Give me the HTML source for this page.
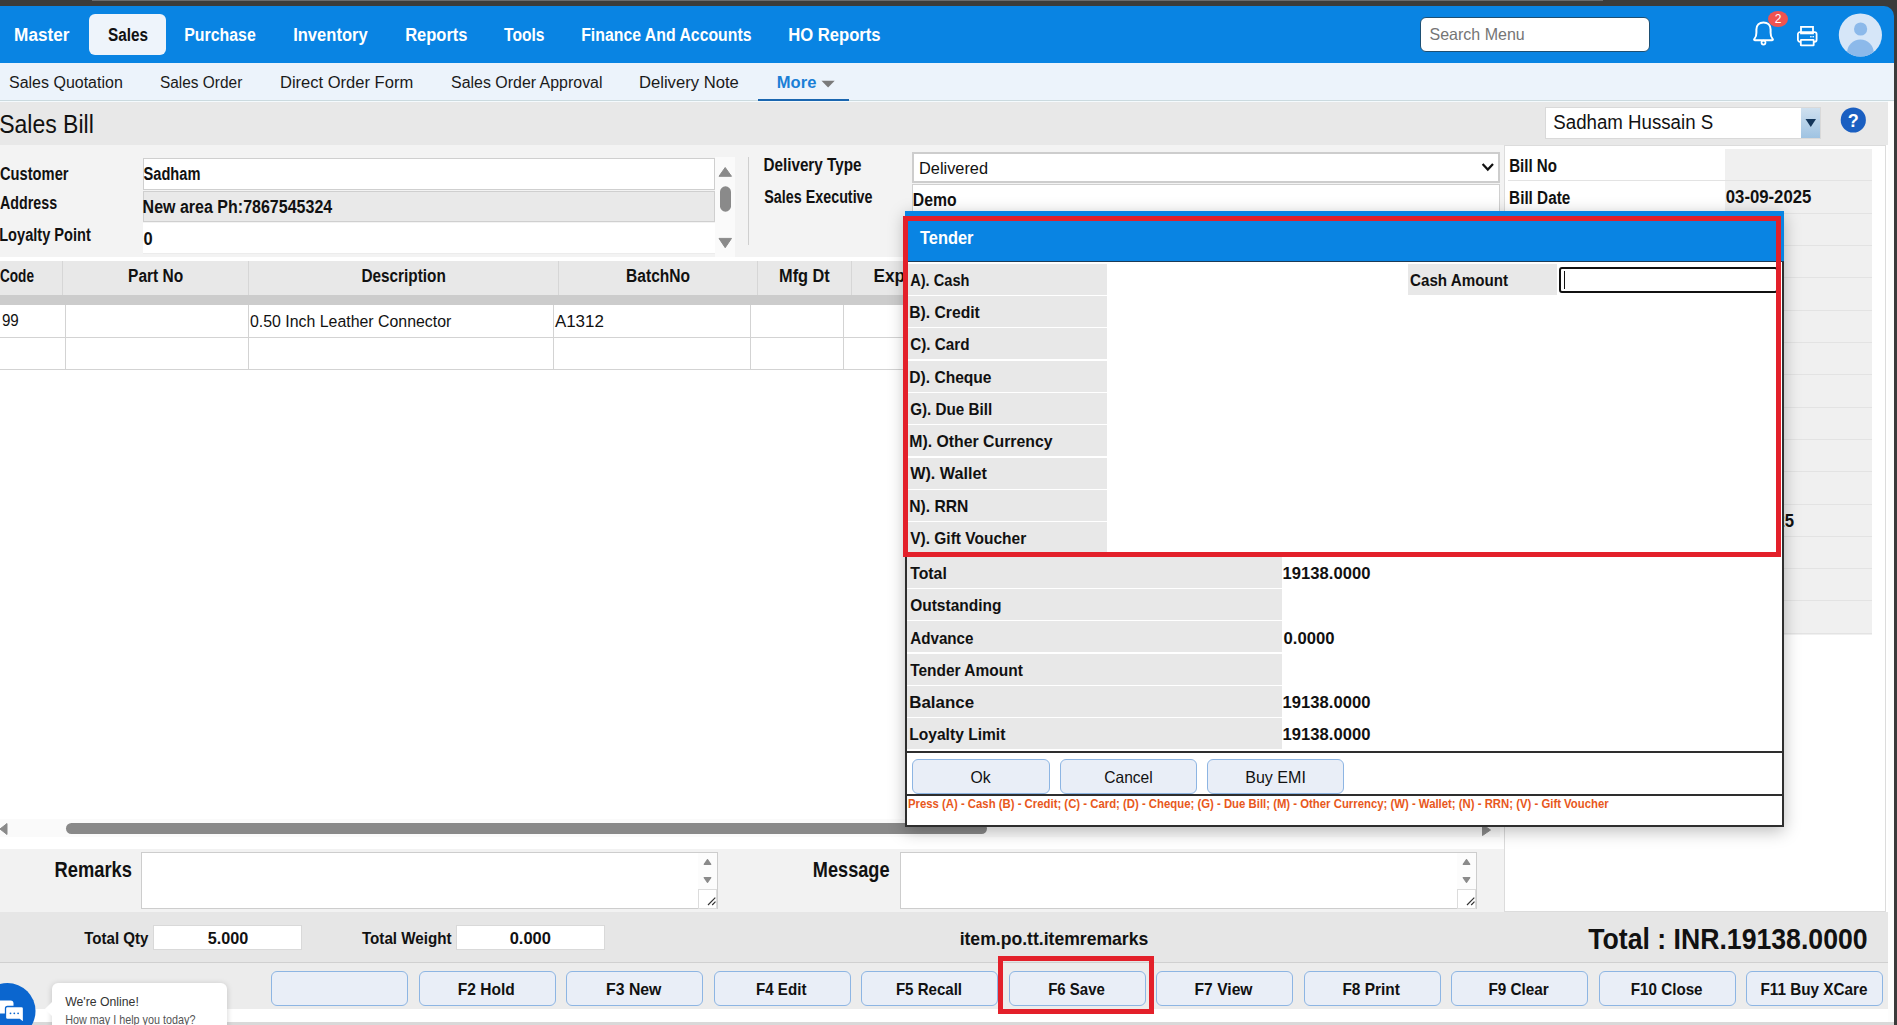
<!DOCTYPE html>
<html><head><meta charset="utf-8"><title>Sales Bill</title>
<style>
html,body{margin:0;padding:0;width:1897px;height:1025px;overflow:hidden;background:#fff;font-family:"Liberation Sans",sans-serif;}
.L{position:absolute;left:0;top:0;width:1897px;height:1025px;}
.L>div{position:absolute;box-sizing:border-box;}
.tl{position:absolute;left:0;top:0;overflow:visible;font-family:"Liberation Sans",sans-serif;}
</style></head><body>
<div class="L" style="z-index:1"><div style="left:0px;top:0px;width:1897px;height:6px;background:#3c3c3a"></div><div style="left:1870px;top:0px;width:27px;height:30px;background:#3b3b3b"></div><div style="left:92px;top:0px;width:1511px;height:1px;background:#6b6b6b"></div><div style="left:1894px;top:0px;width:3px;height:1025px;background:#3b3b3b"></div><div style="left:0px;top:6px;width:1894px;height:57px;background:#0984e3;border-top-right-radius:10px"></div><div style="left:0px;top:63px;width:1894px;height:38px;background:#ecf3fb;border-bottom:1px solid #cbdadf"></div><div style="left:0px;top:101px;width:1888px;height:1px;background:#f4fafd"></div><div style="left:0px;top:102px;width:1888px;height:43px;background:#e8e8e8"></div><div style="left:0px;top:145px;width:1504px;height:112px;background:#f3f3f3"></div><div style="left:1888px;top:101px;width:6px;height:922px;background:#fdfdfd"></div><div style="left:0px;top:1022px;width:1894px;height:3px;background:#d9d9d9"></div><div style="left:89px;top:14px;width:77px;height:41px;background:#eef4fb;border-radius:6px"></div><div style="left:1420px;top:17px;width:230px;height:35px;background:#fff;border:1px solid #1d4f73;border-radius:6px"></div><div style="left:758px;top:99px;width:91px;height:2px;background:#1a66b0"></div><div style="left:1545px;top:107px;width:276px;height:32px;background:#fff;border:1px solid #d9d9d9"></div><div style="left:1801px;top:108px;width:19px;height:30px;background:linear-gradient(#cfe0ef,#9fc3e2)"></div><svg style="position:absolute;left:1805px;top:118px" width="12" height="10"><path d="M0.5 1 L11 1 L5.75 9 Z" fill="#14365a"/></svg><svg style="position:absolute;left:1840px;top:107px" width="27" height="27"><circle cx="13.3" cy="13" r="12.6" fill="#1a5fc1"/><text x="13.3" y="19.5" text-anchor="middle" font-family="Liberation Sans" font-weight="700" font-size="18" fill="#fff">?</text></svg><div style="left:143px;top:158px;width:572px;height:32px;background:#fff;border:1px solid #cfcfcf"></div><div style="left:143px;top:191px;width:572px;height:31px;background:#e9e9e9;border:1px solid #cfcfcf"></div><div style="left:143px;top:223px;width:572px;height:31px;background:#fff;border-bottom:1px solid #ececec"></div><div style="left:715px;top:157px;width:20px;height:100px;background:#fafafa"></div><svg style="position:absolute;left:715px;top:157px" width="20" height="100"><path d="M4 19.3 L10.2 10.5 L16.5 19.3 Z" fill="#8a8a8a" stroke="#8a8a8a" stroke-width="1" stroke-linejoin="round"/><rect x="5" y="29.3" width="11" height="25.4" rx="5.5" fill="#8a8a8a"/><path d="M4 81.4 L16.5 81.4 L10.2 90.7 Z" fill="#8a8a8a" stroke="#8a8a8a" stroke-width="1" stroke-linejoin="round"/></svg><div style="left:748px;top:157px;width:1px;height:88px;background:#cfcfcf"></div><div style="left:912px;top:152px;width:588px;height:31px;background:#fff;border:2px solid #cdcdcd"></div><svg style="position:absolute;left:1481px;top:162px" width="14" height="11"><path d="M1.6 2 L6.8 7.6 L12 2" fill="none" stroke="#111" stroke-width="2.2"/></svg><div style="left:912px;top:184px;width:588px;height:40px;background:#fff;border-left:1px solid #d0d0d0;border-top:1px solid #d0d0d0;border-right:1px solid #d0d0d0"></div><div style="left:0px;top:257px;width:1500px;height:592px;background:#fff"></div><div style="left:0px;top:261px;width:1500px;height:34px;background:#e8e8e8"></div><div style="left:62px;top:261px;width:1px;height:34px;background:#d6d6d6"></div><div style="left:248px;top:261px;width:1px;height:34px;background:#d6d6d6"></div><div style="left:558px;top:261px;width:1px;height:34px;background:#d6d6d6"></div><div style="left:757px;top:261px;width:1px;height:34px;background:#d6d6d6"></div><div style="left:851px;top:261px;width:1px;height:34px;background:#d6d6d6"></div><div style="left:0px;top:295px;width:1500px;height:10px;background:#cccccc"></div><div style="left:0px;top:337px;width:1500px;height:1px;background:#d3d3d3"></div><div style="left:0px;top:369px;width:1500px;height:1px;background:#d3d3d3"></div><div style="left:65px;top:305px;width:1px;height:65px;background:#d3d3d3"></div><div style="left:248px;top:305px;width:1px;height:65px;background:#d3d3d3"></div><div style="left:553px;top:305px;width:1px;height:65px;background:#d3d3d3"></div><div style="left:750px;top:305px;width:1px;height:65px;background:#d3d3d3"></div><div style="left:843px;top:305px;width:1px;height:65px;background:#d3d3d3"></div><div style="left:0px;top:819px;width:1500px;height:18px;background:#fafafa"></div><div style="left:66px;top:823px;width:921px;height:11px;background:#898989;border-radius:6px"></div><svg style="position:absolute;left:0;top:822px" width="10" height="14"><path d="M7 1.5 L7 12.5 L0 7 Z" fill="#8a8a8a" stroke="#8a8a8a" stroke-linejoin="round"/></svg><svg style="position:absolute;left:1481px;top:823px" width="12" height="14"><path d="M1.5 1.5 L1.5 12.5 L9.5 7 Z" fill="#8a8a8a" stroke="#8a8a8a" stroke-linejoin="round"/></svg><div style="left:0px;top:849px;width:1504px;height:63px;background:#f2f2f2"></div><div style="left:141px;top:852px;width:577px;height:57px;background:#fff;border:1px solid #cdcdcd"></div><div style="left:900px;top:852px;width:577px;height:57px;background:#fff;border:1px solid #cdcdcd"></div><svg style="position:absolute;left:698px;top:853px" width="19" height="56"><rect x="0" y="0" width="19" height="36" fill="#fcfcfc"/><path d="M6.2 11.3 L9.5 6.6 L12.8 11.3 Z" fill="#8a8a8a" stroke="#8a8a8a" stroke-width="1.2" stroke-linejoin="round"/><path d="M6.2 24.6 L12.8 24.6 L9.5 29.3 Z" fill="#8a8a8a" stroke="#8a8a8a" stroke-width="1.2" stroke-linejoin="round"/><rect x="0.5" y="36.5" width="18" height="19" fill="#fff" stroke="#dcdcdc"/><path d="M10 52 L17.3 44.7 M14.2 52 L17.5 48.7" stroke="#333" stroke-width="1.2"/></svg><svg style="position:absolute;left:1457px;top:853px" width="19" height="56"><rect x="0" y="0" width="19" height="36" fill="#fcfcfc"/><path d="M6.2 11.3 L9.5 6.6 L12.8 11.3 Z" fill="#8a8a8a" stroke="#8a8a8a" stroke-width="1.2" stroke-linejoin="round"/><path d="M6.2 24.6 L12.8 24.6 L9.5 29.3 Z" fill="#8a8a8a" stroke="#8a8a8a" stroke-width="1.2" stroke-linejoin="round"/><rect x="0.5" y="36.5" width="18" height="19" fill="#fff" stroke="#dcdcdc"/><path d="M10 52 L17.3 44.7 M14.2 52 L17.5 48.7" stroke="#333" stroke-width="1.2"/></svg><div style="left:1504px;top:145px;width:382px;height:767px;background:#fff;border:1px solid #dcdcdc"></div><div style="left:1508px;top:149px;width:364px;height:486px;background:#fff"></div><div style="left:1725px;top:149px;width:147px;height:486px;background:#f0f0f0"></div><div style="left:1508px;top:180px;width:364px;height:1px;background:#e3e3e3"></div><div style="left:1508px;top:213px;width:364px;height:1px;background:#e3e3e3"></div><div style="left:1508px;top:245px;width:364px;height:1px;background:#e3e3e3"></div><div style="left:1508px;top:277px;width:364px;height:1px;background:#e3e3e3"></div><div style="left:1508px;top:310px;width:364px;height:1px;background:#e3e3e3"></div><div style="left:1508px;top:342px;width:364px;height:1px;background:#e3e3e3"></div><div style="left:1508px;top:374px;width:364px;height:1px;background:#e3e3e3"></div><div style="left:1508px;top:407px;width:364px;height:1px;background:#e3e3e3"></div><div style="left:1508px;top:439px;width:364px;height:1px;background:#e3e3e3"></div><div style="left:1508px;top:471px;width:364px;height:1px;background:#e3e3e3"></div><div style="left:1508px;top:504px;width:364px;height:1px;background:#e3e3e3"></div><div style="left:1508px;top:536px;width:364px;height:1px;background:#e3e3e3"></div><div style="left:1508px;top:568px;width:364px;height:1px;background:#e3e3e3"></div><div style="left:1508px;top:600px;width:364px;height:1px;background:#e3e3e3"></div><div style="left:1508px;top:633px;width:364px;height:1px;background:#e3e3e3"></div><div style="left:0px;top:912px;width:1888px;height:51px;background:#e6e6e6;border-bottom:1px solid #d0d0d0"></div><div style="left:153px;top:925px;width:149px;height:25px;background:#fff;border:1px solid #d9d9d9"></div><div style="left:456px;top:925px;width:149px;height:25px;background:#fff;border:1px solid #d9d9d9"></div><div style="left:0px;top:963px;width:1888px;height:46px;background:#ececec"></div><div style="left:271px;top:971px;width:137px;height:35px;background:#e9eef7;border:1px solid #8db5e3;border-radius:6px"></div><div style="left:419px;top:971px;width:137px;height:35px;background:#e9eef7;border:1px solid #8db5e3;border-radius:6px"></div><div style="left:566px;top:971px;width:137px;height:35px;background:#e9eef7;border:1px solid #8db5e3;border-radius:6px"></div><div style="left:714px;top:971px;width:137px;height:35px;background:#e9eef7;border:1px solid #8db5e3;border-radius:6px"></div><div style="left:861px;top:971px;width:137px;height:35px;background:#e9eef7;border:1px solid #8db5e3;border-radius:6px"></div><div style="left:1009px;top:971px;width:137px;height:35px;background:#e9eef7;border:1px solid #8db5e3;border-radius:6px"></div><div style="left:1156px;top:971px;width:137px;height:35px;background:#e9eef7;border:1px solid #8db5e3;border-radius:6px"></div><div style="left:1304px;top:971px;width:137px;height:35px;background:#e9eef7;border:1px solid #8db5e3;border-radius:6px"></div><div style="left:1451px;top:971px;width:137px;height:35px;background:#e9eef7;border:1px solid #8db5e3;border-radius:6px"></div><div style="left:1599px;top:971px;width:137px;height:35px;background:#e9eef7;border:1px solid #8db5e3;border-radius:6px"></div><div style="left:1746px;top:971px;width:137px;height:35px;background:#e9eef7;border:1px solid #8db5e3;border-radius:6px"></div><svg style="position:absolute;left:1750px;top:8px" width="45" height="42"><path d="M4.6 30.6 C6.6 28.6 6.4 26.5 6.4 24 L6.4 21.5 C6.4 17 9.5 14.4 13.5 14.4 C17.5 14.4 20.6 17 20.6 21.5 L20.6 24 C20.6 26.5 20.4 28.6 22.4 30.6 Q23.6 32 22 32.2 L5 32.2 Q3.4 32 4.6 30.6 Z" fill="none" stroke="#fff" stroke-width="2" stroke-linejoin="round"/><circle cx="13.5" cy="34.6" r="2" fill="none" stroke="#fff" stroke-width="1.7"/><ellipse cx="28" cy="11" rx="10" ry="8" fill="#ef5350"/><text x="28" y="15.3" text-anchor="middle" font-family="Liberation Sans" font-size="12" fill="#fff">2</text></svg><svg style="position:absolute;left:1795px;top:24px" width="25" height="24"><rect x="6" y="2.9" width="12" height="6.5" fill="none" stroke="#fff" stroke-width="1.8"/><rect x="2.9" y="8.2" width="18.7" height="9.6" rx="2" fill="none" stroke="#fff" stroke-width="1.8"/><rect x="5.8" y="15.8" width="12.9" height="5.6" rx="0.5" fill="#0984e3" stroke="#fff" stroke-width="1.8"/><rect x="15.2" y="12" width="1.4" height="1.4" fill="#fff"/><rect x="17.5" y="12" width="1.4" height="1.4" fill="#fff"/></svg><svg style="position:absolute;left:1838px;top:13px" width="45" height="45"><defs><clipPath id="av"><circle cx="22.4" cy="22" r="21.6"/></clipPath></defs><circle cx="22.4" cy="22" r="21.6" fill="#d6e6f8"/><g clip-path="url(#av)"><circle cx="22.6" cy="16" r="6.6" fill="#8cb9ea"/><ellipse cx="22.4" cy="40" rx="13.4" ry="13.6" fill="#8cb9ea"/></g></svg><svg style="position:absolute;left:820px;top:79px" width="16" height="10"><path d="M1.5 1.7 L14.7 1.7 L8.1 8.5 Z" fill="#7a7a7a"/></svg></div>
<svg class="tl" style="z-index:2" width="1897" height="1025"><text x="14.10" y="41.4" font-size="19.19" font-weight="700" fill="#fff" textLength="55.42" lengthAdjust="spacingAndGlyphs">Master</text><text x="184.17" y="41.4" font-size="19.19" font-weight="700" fill="#fff" textLength="71.56" lengthAdjust="spacingAndGlyphs">Purchase</text><text x="293.14" y="41.4" font-size="19.19" font-weight="700" fill="#fff" textLength="74.58" lengthAdjust="spacingAndGlyphs">Inventory</text><text x="405.14" y="41.4" font-size="19.19" font-weight="700" fill="#fff" textLength="62.44" lengthAdjust="spacingAndGlyphs">Reports</text><text x="504.00" y="41.4" font-size="19.19" font-weight="700" fill="#fff" textLength="40.55" lengthAdjust="spacingAndGlyphs">Tools</text><text x="581.18" y="41.4" font-size="19.19" font-weight="700" fill="#fff" textLength="170.37" lengthAdjust="spacingAndGlyphs">Finance And Accounts</text><text x="788.13" y="41.4" font-size="19.19" font-weight="700" fill="#fff" textLength="92.45" lengthAdjust="spacingAndGlyphs">HO Reports</text><text x="108.00" y="41.4" font-size="19.19" font-weight="700" fill="#111" textLength="40.04" lengthAdjust="spacingAndGlyphs">Sales</text><text x="1429.50" y="39.9" font-size="16.72" font-weight="normal" fill="#757575" textLength="95.28" lengthAdjust="spacingAndGlyphs">Search Menu</text><text x="9.00" y="87.6" font-size="15.84" font-weight="normal" fill="#1a1a1a" textLength="113.81" lengthAdjust="spacingAndGlyphs">Sales Quotation</text><text x="160.00" y="87.6" font-size="15.84" font-weight="normal" fill="#1a1a1a" textLength="82.29" lengthAdjust="spacingAndGlyphs">Sales Order</text><text x="279.96" y="87.6" font-size="15.84" font-weight="normal" fill="#1a1a1a" textLength="133.24" lengthAdjust="spacingAndGlyphs">Direct Order Form</text><text x="451.00" y="87.6" font-size="15.84" font-weight="normal" fill="#1a1a1a" textLength="151.52" lengthAdjust="spacingAndGlyphs">Sales Order Approval</text><text x="638.95" y="87.6" font-size="15.84" font-weight="normal" fill="#1a1a1a" textLength="99.84" lengthAdjust="spacingAndGlyphs">Delivery Note</text><text x="776.82" y="87.8" font-size="16.86" font-weight="700" fill="#1a7fd6" textLength="39.55" lengthAdjust="spacingAndGlyphs">More</text><text x="-0.87" y="133" font-size="26.45" font-weight="normal" fill="#111" textLength="94.63" lengthAdjust="spacingAndGlyphs">Sales Bill</text><text x="1553.30" y="128.9" font-size="19.77" font-weight="normal" fill="#111" textLength="159.87" lengthAdjust="spacingAndGlyphs">Sadham Hussain S</text><text x="0.00" y="180" font-size="17.44" font-weight="700" fill="#111" textLength="68.52" lengthAdjust="spacingAndGlyphs">Customer</text><text x="0.00" y="208.5" font-size="17.44" font-weight="700" fill="#111" textLength="57.07" lengthAdjust="spacingAndGlyphs">Address</text><text x="-0.84" y="241.3" font-size="17.44" font-weight="700" fill="#111" textLength="91.68" lengthAdjust="spacingAndGlyphs">Loyalty Point</text><text x="143.50" y="180" font-size="17.44" font-weight="700" fill="#111" textLength="56.92" lengthAdjust="spacingAndGlyphs">Sadham</text><text x="142.58" y="213" font-size="17.44" font-weight="700" fill="#111" textLength="189.64" lengthAdjust="spacingAndGlyphs">New area Ph:7867545324</text><text x="143.50" y="245" font-size="17.44" font-weight="700" fill="#111" textLength="9.16" lengthAdjust="spacingAndGlyphs">0</text><text x="763.42" y="171" font-size="17.44" font-weight="700" fill="#111" textLength="98.11" lengthAdjust="spacingAndGlyphs">Delivery Type</text><text x="764.30" y="203.2" font-size="17.44" font-weight="700" fill="#111" textLength="108.25" lengthAdjust="spacingAndGlyphs">Sales Executive</text><text x="919.05" y="174" font-size="17.15" font-weight="normal" fill="#111" textLength="68.96" lengthAdjust="spacingAndGlyphs">Delivered</text><text x="912.80" y="205.9" font-size="17.44" font-weight="700" fill="#111" textLength="43.79" lengthAdjust="spacingAndGlyphs">Demo</text><text x="1509.13" y="172" font-size="17.44" font-weight="700" fill="#111" textLength="47.83" lengthAdjust="spacingAndGlyphs">Bill No</text><text x="1509.12" y="204" font-size="17.44" font-weight="700" fill="#111" textLength="61.11" lengthAdjust="spacingAndGlyphs">Bill Date</text><text x="1725.80" y="203.3" font-size="17.44" font-weight="700" fill="#111" textLength="85.51" lengthAdjust="spacingAndGlyphs">03-09-2025</text><text x="1708.50" y="527" font-size="17.44" font-weight="700" fill="#111" textLength="85.51" lengthAdjust="spacingAndGlyphs">03-09-2025</text><text x="0.00" y="282" font-size="17.44" font-weight="700" fill="#111" textLength="33.96" lengthAdjust="spacingAndGlyphs">Code</text><text x="128.11" y="282" font-size="17.44" font-weight="700" fill="#111" textLength="55.17" lengthAdjust="spacingAndGlyphs">Part No</text><text x="361.42" y="282" font-size="17.44" font-weight="700" fill="#111" textLength="84.45" lengthAdjust="spacingAndGlyphs">Description</text><text x="626.11" y="282" font-size="17.44" font-weight="700" fill="#111" textLength="63.97" lengthAdjust="spacingAndGlyphs">BatchNo</text><text x="779.06" y="282" font-size="17.44" font-weight="700" fill="#111" textLength="50.76" lengthAdjust="spacingAndGlyphs">Mfg Dt</text><text x="873.51" y="282" font-size="17.44" font-weight="700" fill="#111" textLength="31.63" lengthAdjust="spacingAndGlyphs">Exp</text><text x="1.90" y="326.3" font-size="16.86" font-weight="normal" fill="#111" textLength="16.84" lengthAdjust="spacingAndGlyphs">99</text><text x="250.00" y="327.2" font-size="16.86" font-weight="normal" fill="#111" textLength="201.34" lengthAdjust="spacingAndGlyphs">0.50 Inch Leather Connector</text><text x="554.90" y="327.2" font-size="16.86" font-weight="normal" fill="#111" textLength="48.98" lengthAdjust="spacingAndGlyphs">A1312</text><text x="54.44" y="877.1" font-size="21.37" font-weight="700" fill="#111" textLength="77.51" lengthAdjust="spacingAndGlyphs">Remarks</text><text x="812.85" y="876.5" font-size="21.37" font-weight="700" fill="#111" textLength="76.65" lengthAdjust="spacingAndGlyphs">Message</text><text x="84.20" y="943.7" font-size="16.86" font-weight="700" fill="#111" textLength="64.24" lengthAdjust="spacingAndGlyphs">Total Qty</text><text x="207.70" y="943.7" font-size="16.86" font-weight="700" fill="#111" textLength="40.56" lengthAdjust="spacingAndGlyphs">5.000</text><text x="361.90" y="943.8" font-size="16.86" font-weight="700" fill="#111" textLength="89.75" lengthAdjust="spacingAndGlyphs">Total Weight</text><text x="509.70" y="943.8" font-size="16.86" font-weight="700" fill="#111" textLength="41.17" lengthAdjust="spacingAndGlyphs">0.000</text><text x="959.63" y="944.9" font-size="18.17" font-weight="700" fill="#111" textLength="188.66" lengthAdjust="spacingAndGlyphs">item.po.tt.itemremarks</text><text x="1588.20" y="948.5" font-size="30.23" font-weight="700" fill="#111" textLength="279.41" lengthAdjust="spacingAndGlyphs">Total : INR.19138.0000</text><text x="457.79" y="995.1" font-size="17.15" font-weight="700" fill="#111" textLength="57.03" lengthAdjust="spacingAndGlyphs">F2 Hold</text><text x="606.08" y="995.1" font-size="17.15" font-weight="700" fill="#111" textLength="55.31" lengthAdjust="spacingAndGlyphs">F3 New</text><text x="756.02" y="995.1" font-size="17.15" font-weight="700" fill="#111" textLength="50.42" lengthAdjust="spacingAndGlyphs">F4 Edit</text><text x="895.92" y="995.1" font-size="17.15" font-weight="700" fill="#111" textLength="66.15" lengthAdjust="spacingAndGlyphs">F5 Recall</text><text x="1048.23" y="995.1" font-size="17.15" font-weight="700" fill="#111" textLength="56.64" lengthAdjust="spacingAndGlyphs">F6 Save</text><text x="1194.59" y="995.1" font-size="17.15" font-weight="700" fill="#111" textLength="57.90" lengthAdjust="spacingAndGlyphs">F7 View</text><text x="1342.40" y="995.1" font-size="17.15" font-weight="700" fill="#111" textLength="57.54" lengthAdjust="spacingAndGlyphs">F8 Print</text><text x="1488.41" y="995.1" font-size="17.15" font-weight="700" fill="#111" textLength="60.40" lengthAdjust="spacingAndGlyphs">F9 Clear</text><text x="1630.81" y="995.1" font-size="17.15" font-weight="700" fill="#111" textLength="71.76" lengthAdjust="spacingAndGlyphs">F10 Close</text><text x="1760.51" y="995.1" font-size="17.15" font-weight="700" fill="#111" textLength="106.97" lengthAdjust="spacingAndGlyphs">F11 Buy XCare</text></svg>
<div class="L" style="z-index:3"><div style="left:905px;top:211px;width:879px;height:616px;background:#fff;border:2px solid #2e2e2e;border-top:none;box-shadow:0 4px 16px rgba(0,0,0,0.27)"></div><div style="left:905px;top:211px;width:879px;height:51px;background:#0984e3;border-bottom:1px solid #1d3b56"></div><div style="left:907px;top:264px;width:200px;height:31px;background:#e8e8e8"></div><div style="left:907px;top:296px;width:200px;height:31px;background:#e8e8e8"></div><div style="left:907px;top:328px;width:200px;height:31px;background:#e8e8e8"></div><div style="left:907px;top:361px;width:200px;height:31px;background:#e8e8e8"></div><div style="left:907px;top:393px;width:200px;height:31px;background:#e8e8e8"></div><div style="left:907px;top:425px;width:200px;height:31px;background:#e8e8e8"></div><div style="left:907px;top:458px;width:200px;height:31px;background:#e8e8e8"></div><div style="left:907px;top:490px;width:200px;height:31px;background:#e8e8e8"></div><div style="left:907px;top:522px;width:200px;height:31px;background:#e8e8e8"></div><div style="left:1408px;top:264px;width:149px;height:31px;background:#e8e8e8"></div><div style="left:1559px;top:267px;width:219px;height:26px;background:#fff;border:2px solid #111;border-radius:3px"></div><div style="left:1564px;top:271px;width:1px;height:18px;background:#111"></div><div style="left:907px;top:557px;width:375px;height:31px;background:#e8e8e8"></div><div style="left:907px;top:589px;width:375px;height:31px;background:#e8e8e8"></div><div style="left:907px;top:621px;width:375px;height:31px;background:#e8e8e8"></div><div style="left:907px;top:654px;width:375px;height:31px;background:#e8e8e8"></div><div style="left:907px;top:686px;width:375px;height:31px;background:#e8e8e8"></div><div style="left:907px;top:718px;width:375px;height:31px;background:#e8e8e8"></div><div style="left:907px;top:751px;width:875px;height:2px;background:#2e2e2e"></div><div style="left:907px;top:794px;width:875px;height:2px;background:#2e2e2e"></div><div style="left:912px;top:759px;width:138px;height:35px;background:#e9eef7;border:1px solid #8db5e3;border-radius:6px"></div><div style="left:1060px;top:759px;width:137px;height:35px;background:#e9eef7;border:1px solid #8db5e3;border-radius:6px"></div><div style="left:1207px;top:759px;width:137px;height:35px;background:#e9eef7;border:1px solid #8db5e3;border-radius:6px"></div></div>
<svg class="tl" style="z-index:4" width="1897" height="1025"><text x="920.00" y="244.3" font-size="18.6" font-weight="700" fill="#fff" textLength="53.51" lengthAdjust="spacingAndGlyphs">Tender</text><text x="910.20" y="285.8" font-size="16.86" font-weight="700" fill="#111" textLength="59.26" lengthAdjust="spacingAndGlyphs">A). Cash</text><text x="909.27" y="318.05" font-size="16.86" font-weight="700" fill="#111" textLength="70.57" lengthAdjust="spacingAndGlyphs">B). Credit</text><text x="910.20" y="350.3" font-size="16.86" font-weight="700" fill="#111" textLength="59.27" lengthAdjust="spacingAndGlyphs">C). Card</text><text x="909.28" y="382.55" font-size="16.86" font-weight="700" fill="#111" textLength="82.27" lengthAdjust="spacingAndGlyphs">D). Cheque</text><text x="910.20" y="414.8" font-size="16.86" font-weight="700" fill="#111" textLength="82.02" lengthAdjust="spacingAndGlyphs">G). Due Bill</text><text x="909.26" y="447.05" font-size="16.86" font-weight="700" fill="#111" textLength="143.35" lengthAdjust="spacingAndGlyphs">M). Other Currency</text><text x="910.20" y="479.3" font-size="16.86" font-weight="700" fill="#111" textLength="76.63" lengthAdjust="spacingAndGlyphs">W). Wallet</text><text x="909.27" y="511.55" font-size="16.86" font-weight="700" fill="#111" textLength="59.09" lengthAdjust="spacingAndGlyphs">N). RRN</text><text x="910.20" y="543.8" font-size="16.86" font-weight="700" fill="#111" textLength="116.00" lengthAdjust="spacingAndGlyphs">V). Gift Voucher</text><text x="1410.00" y="286" font-size="16.86" font-weight="700" fill="#111" textLength="98.05" lengthAdjust="spacingAndGlyphs">Cash Amount</text><text x="910.20" y="579.0" font-size="16.86" font-weight="700" fill="#111" textLength="36.64" lengthAdjust="spacingAndGlyphs">Total</text><text x="1282.61" y="579.0" font-size="16.86" font-weight="700" fill="#111" textLength="87.76" lengthAdjust="spacingAndGlyphs">19138.0000</text><text x="910.20" y="611.25" font-size="16.86" font-weight="700" fill="#111" textLength="91.27" lengthAdjust="spacingAndGlyphs">Outstanding</text><text x="910.20" y="643.5" font-size="16.86" font-weight="700" fill="#111" textLength="63.34" lengthAdjust="spacingAndGlyphs">Advance</text><text x="1283.60" y="643.5" font-size="16.86" font-weight="700" fill="#111" textLength="50.97" lengthAdjust="spacingAndGlyphs">0.0000</text><text x="910.20" y="675.75" font-size="16.86" font-weight="700" fill="#111" textLength="112.65" lengthAdjust="spacingAndGlyphs">Tender Amount</text><text x="909.20" y="708.0" font-size="16.86" font-weight="700" fill="#111" textLength="64.88" lengthAdjust="spacingAndGlyphs">Balance</text><text x="1282.61" y="708.0" font-size="16.86" font-weight="700" fill="#111" textLength="87.76" lengthAdjust="spacingAndGlyphs">19138.0000</text><text x="909.28" y="740.25" font-size="16.86" font-weight="700" fill="#111" textLength="96.07" lengthAdjust="spacingAndGlyphs">Loyalty Limit</text><text x="1282.61" y="740.25" font-size="16.86" font-weight="700" fill="#111" textLength="87.76" lengthAdjust="spacingAndGlyphs">19138.0000</text><text x="970.40" y="782.5" font-size="16.72" font-weight="normal" fill="#111" textLength="20.19" lengthAdjust="spacingAndGlyphs">Ok</text><text x="1104.20" y="782.5" font-size="16.72" font-weight="normal" fill="#111" textLength="48.56" lengthAdjust="spacingAndGlyphs">Cancel</text><text x="1245.24" y="782.5" font-size="16.72" font-weight="normal" fill="#111" textLength="60.68" lengthAdjust="spacingAndGlyphs">Buy EMI</text><text x="907.90" y="807.7" font-size="12.35" font-weight="700" fill="#e8581c" textLength="700.82" lengthAdjust="spacingAndGlyphs">Press (A) - Cash (B) - Credit; (C) - Card; (D) - Cheque; (G) - Due Bill; (M) - Other Currency; (W) - Wallet; (N) - RRN; (V) - Gift Voucher</text></svg>
<div class="L" style="z-index:5"><div style="left:903px;top:216px;width:878px;height:341px;border:5px solid #e3202a"></div><div style="left:998px;top:956px;width:156px;height:58px;border:5px solid #e3202a"></div><svg style="position:absolute;left:0;top:983px" width="40" height="42"><circle cx="7.5" cy="28" r="28" fill="#0b66cf"/><rect x="-6" y="17.5" width="19.5" height="13" rx="3" fill="#fff"/><path d="M7.5 23.5 L21.5 23.5 Q23.5 23.5 23.5 25.5 L23.5 39.5 L19.5 36.5 L7.5 36.5 Q5.5 36.5 5.5 34.5 L5.5 25.5 Q5.5 23.5 7.5 23.5 Z" fill="#fff" stroke="#0b66cf" stroke-width="1.3"/><circle cx="10.5" cy="30.3" r="0.9" fill="#0b66cf"/><circle cx="14.3" cy="30.3" r="0.9" fill="#0b66cf"/><circle cx="18.1" cy="30.3" r="0.9" fill="#0b66cf"/></svg><div style="left:52px;top:983px;width:175px;height:50px;background:#fff;border-radius:6px;box-shadow:0 1px 6px rgba(0,0,0,0.18)"></div><div style="left:47px;top:1004px;width:10px;height:10px;background:#fff;transform:rotate(45deg)"></div></div>
<svg class="tl" style="z-index:6" width="1897" height="1025"><text x="65.20" y="1005.7" font-size="11.92" font-weight="normal" fill="#333" textLength="73.62" lengthAdjust="spacingAndGlyphs">We're Online!</text><text x="65.20" y="1023.5" font-size="11.92" font-weight="normal" fill="#555" textLength="130.26" lengthAdjust="spacingAndGlyphs">How may I help you today?</text></svg>
</body></html>
